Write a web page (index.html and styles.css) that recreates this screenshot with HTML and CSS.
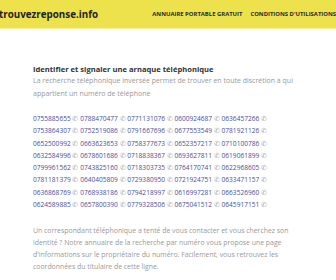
FILE: index.html
```html
<!DOCTYPE html>
<html>
	<head>
		<meta charset="UTF-8">
		<meta name="viewport" content="width=device-width, initial-scale=1">
		<link rel="stylesheet" href="styles.css">
	</head>
	<body>
		<header class="topbar">
			<a class="logo" href="#">trouvezreponse.info</a>
			<nav class="menu">
				<a href="#">Annuaire portable gratuit</a>
				<a href="#">Conditions d'utilisations</a>
			</nav>
		</header>
		<main class="content">
			<h1>Identifier et signaler une arnaque téléphonique</h1>
			<p class="intro">La recherche téléphonique inversée permet de trouver en toute discrétion à qui appartient un numéro de téléphone</p>
			<div class="numbers">
				<a href="#">0755885655</a> ✆ <a href="#">0788470477</a> ✆ <a href="#">0771131076</a> ✆ <a href="#">0600924687</a> ✆ <a href="#">0636457266</a> ✆
				<a href="#">0753864307</a> ✆ <a href="#">0752519086</a> ✆ <a href="#">0791667696</a> ✆ <a href="#">0677553549</a> ✆ <a href="#">0781921126</a> ✆
				<a href="#">0652500992</a> ✆ <a href="#">0663623653</a> ✆ <a href="#">0758377673</a> ✆ <a href="#">0652357217</a> ✆ <a href="#">0710100786</a> ✆
				<a href="#">0632584996</a> ✆ <a href="#">0678601686</a> ✆ <a href="#">0718838367</a> ✆ <a href="#">0693627811</a> ✆ <a href="#">0619061899</a> ✆
				<a href="#">0799961562</a> ✆ <a href="#">0743825160</a> ✆ <a href="#">0718303735</a> ✆ <a href="#">0764170741</a> ✆ <a href="#">0622968605</a> ✆
				<a href="#">0781181379</a> ✆ <a href="#">0640405809</a> ✆ <a href="#">0729380950</a> ✆ <a href="#">0721924751</a> ✆ <a href="#">0633471157</a> ✆
				<a href="#">0636868769</a> ✆ <a href="#">0768938186</a> ✆ <a href="#">0794218997</a> ✆ <a href="#">0616997281</a> ✆ <a href="#">0663526960</a> ✆
				<a href="#">0624589885</a> ✆ <a href="#">0657800390</a> ✆ <a href="#">0779328506</a> ✆ <a href="#">0675041512</a> ✆ <a href="#">0645917151</a> ✆
			</div>
			<p class="outro">Un correspondant téléphonique a tenté de vous contacter et vous cherchez son identité ? Notre annuaire de la recherche par numéro vous propose une page d'informations sur le propriétaire du numéro. Facilement, vous retrouvez les coordonnées du titulaire de cette ligne.</p>
		</main>
	</body>
</html>
```

FILE: styles.css
```css
body {
	margin: 0;
	background: #fff;
	font-family: "Open Sans", "Noto Sans", sans-serif;
	color: #888;
	overflow: hidden;
}

.topbar {
	display: flex;
	align-items: center;
	justify-content: space-between;
	height: 28px;
	background: #ede24c;
	border-bottom: 1px solid #f5efa8;
	overflow: hidden;
}
.logo {
	font-size: 9.8px;
	font-weight: bold;
	color: #222;
	text-decoration: none;
	margin-left: -1px;
}
.menu {
	display: flex;
	gap: 8px;
	margin-right: 0;
}
.menu a {
	font-size: 5.9px;
	font-weight: bold;
	text-transform: uppercase;
	color: #2a2a2a;
	text-decoration: none;
	white-space: nowrap;
}

.content {
	width: 264px;
	padding: 36px 0 0 33px;
}
h1 {
	margin: 0;
	font-size: 7.6px;
	font-weight: bold;
	color: #333;
	line-height: 9px;
}
.intro {
	margin: 0;
	font-size: 7px;
	line-height: 13px;
	color: #999;
}
.numbers {
	width: 270px;
	margin-top: 13px;
	font-size: 6.6px;
	line-height: 12.3px;
	color: #aaa;
}
.numbers a {
	color: #4a4e9e;
	text-decoration: none;
}
.outro {
	margin: 14px 0 0;
	font-size: 6.9px;
	line-height: 11.8px;
	color: #999;
}
```
